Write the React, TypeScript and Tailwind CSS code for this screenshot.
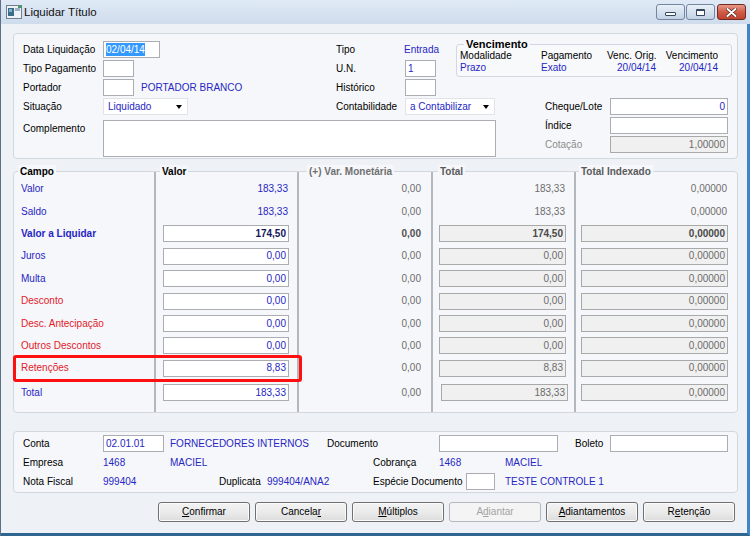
import type { ReactNode } from 'react'

const BLUE = 'text-[#2626c4]'
const RED = 'text-[#e3202a]'

function Field({
  w,
  off = false,
  right = false,
  children,
}: {
  w: string
  off?: boolean
  right?: boolean
  children?: ReactNode
}) {
  return (
    <div
      className={`${w} flex h-[17px] shrink-0 items-center border px-[2px] ${
        off ? 'border-[#a9a9a9] bg-[#f0f0f0] text-[#6b6b6b]' : 'border-[#abadb3] bg-white text-[#2626c4]'
      } ${right ? 'justify-end' : 'justify-start'}`}
    >
      {children}
    </div>
  )
}

function Combo({ w, value }: { w: string; value: string }) {
  return (
    <div className={`${w} flex h-[17px] shrink-0 items-center justify-between border border-[#e1e3e8] bg-white pl-[4px] pr-[5px] text-[#2626c4]`}>
      {value}
      <span className="h-0 w-0 border-x-[3.5px] border-t-[4px] border-x-transparent border-t-black" />
    </div>
  )
}

function Btn({ children, disabled = false }: { children: ReactNode; disabled?: boolean }) {
  return (
    <button
      className={`flex h-[20px] w-[92px] items-center justify-center rounded-[3px] border text-[10px] ${
        disabled
          ? 'border-[#b5b9bd] bg-[#f4f4f4] text-[#a3a3a3]'
          : 'border-[#707070] bg-gradient-to-b from-[#f3f3f3] via-[#ebebeb] to-[#dcdcdc] text-black shadow-[inset_0_0_0_1px_#fbfbfb]'
      }`}
    >
      {children}
    </button>
  )
}

type Row = {
  label: string
  tone: 'blue' | 'red'
  bold?: boolean
  plain?: boolean
  valor: string
  total: string
}

const rows: Row[] = [
  { label: 'Valor', tone: 'blue', plain: true, valor: '183,33', total: '183,33' },
  { label: 'Saldo', tone: 'blue', plain: true, valor: '183,33', total: '183,33' },
  { label: 'Valor a Liquidar', tone: 'blue', bold: true, valor: '174,50', total: '174,50' },
  { label: 'Juros', tone: 'blue', valor: '0,00', total: '0,00' },
  { label: 'Multa', tone: 'blue', valor: '0,00', total: '0,00' },
  { label: 'Desconto', tone: 'red', valor: '0,00', total: '0,00' },
  { label: 'Desc. Antecipação', tone: 'red', valor: '0,00', total: '0,00' },
  { label: 'Outros Descontos', tone: 'red', valor: '0,00', total: '0,00' },
  { label: 'Retenções', tone: 'red', valor: '8,83', total: '8,83' },
  { label: 'Total', tone: 'blue', valor: '183,33', total: '183,33' },
]

// the last line (Total) sits a little lower than the others
const rowCls = (r: Row) => `flex h-[22.4px] items-center ${r.label === 'Total' ? 'mt-[2px]' : ''}`

function Column({
  w,
  sep = false,
  title,
  titleCls,
  children,
}: {
  w: string
  sep?: boolean
  title: string
  titleCls: string
  children: ReactNode
}) {
  return (
    <div className={`${w} flex shrink-0 flex-col ${sep ? 'border-l-2 border-l-[#b3b8bf]' : ''}`}>
      <span className={`-mt-[7px] h-[13px] self-start bg-[#f6f7fa] px-[2px] font-bold leading-[13px] ${titleCls}`}>
        {title}
      </span>
      {children}
    </div>
  )
}

export default function App() {
  return (
    <div className="relative flex h-[536px] w-[750px] flex-col overflow-hidden border-l border-l-[#5d708a] bg-[#d3e0ef] font-['Liberation_Sans',Arial,sans-serif] text-[10px] leading-[12px] text-black">
      {/* title bar */}
      <div className="flex h-[24px] shrink-0 items-center bg-gradient-to-b from-[#e0eaf6] to-[#cfdcec] pl-[5px] pr-[4px]">
        <svg width="16" height="14" viewBox="0 0 16 14" className="shrink-0">
          <rect x="0.5" y="0.5" width="15" height="13" fill="#eef2f6" stroke="#6f7f90" />
          <rect x="2" y="3" width="6" height="8" fill="#3c6c8a" />
          <rect x="3" y="4" width="3" height="3" fill="#7fb0cf" />
          <rect x="9" y="3" width="5" height="3" fill="#9fb2c4" />
          <rect x="12" y="1" width="3" height="2" fill="#3fa34d" />
        </svg>
        <span className="ml-[2px] text-[11.5px] leading-[14px] text-[#111]">Liquidar Título</span>
        <div className="ml-auto flex items-start gap-[1px] self-start pt-[4px]">
          <div className="flex h-[16px] w-[29px] items-end justify-center rounded-[3px] border border-[#7387a3] bg-gradient-to-b from-[#e9f0f8] to-[#c3d2e5] pb-[3px]">
            <div className="h-[4px] w-[11px] rounded-[1px] border border-[#34475f] bg-white" />
          </div>
          <div className="flex h-[16px] w-[29px] items-center justify-center rounded-[3px] border border-[#7387a3] bg-gradient-to-b from-[#e9f0f8] to-[#c3d2e5]">
            <div className="h-[7px] w-[9px] rounded-[1px] border border-t-2 border-[#34475f] bg-white" />
          </div>
          <div className="ml-[1px] flex h-[16px] w-[29px] items-center justify-center rounded-[3px] border border-[#6f2a22] bg-gradient-to-b from-[#e79a8b] via-[#cf5a47] to-[#c0412f]">
            <svg width="11" height="9" viewBox="0 0 11 9">
              <path d="M1.5 1 L9.5 8 M9.5 1 L1.5 8" stroke="#4a1a14" strokeWidth="3.2" strokeLinecap="round" />
              <path d="M1.5 1 L9.5 8 M9.5 1 L1.5 8" stroke="#ffffff" strokeWidth="2" strokeLinecap="round" />
            </svg>
          </div>
        </div>
      </div>

      {/* client area */}
      <div className="flex flex-1 flex-col border-r-[3px] border-b-[3px] border-r-[#3f86c8] border-b-[#2f6690] bg-[#eef1f6] pl-[12px] pr-[9px]">
        {/* top panel */}
        <div className="mt-[9px] h-[126px] rounded-[4px] border border-[#d3d8e0] bg-[#f6f7fa] pl-[9px] pt-[4px]">
          <div className="flex items-start">
            <div className="flex w-[433px] shrink-0 flex-col gap-[2px] pt-[3px]">
              <div className="flex h-[17px] items-center">
                <span className="w-[80px] shrink-0">Data Liquidação</span>
                <div className="w-[233px] shrink-0">
                  <Field w="w-[57px]">
                    <span className="bg-[#3399ff] leading-[13px] text-white">02/04/14</span>
                  </Field>
                </div>
                <span className="w-[68px] shrink-0">Tipo</span>
                <span className={BLUE}>Entrada</span>
              </div>
              <div className="flex h-[17px] items-center">
                <span className="w-[80px] shrink-0">Tipo Pagamento</span>
                <div className="w-[233px] shrink-0">
                  <Field w="w-[31px]" />
                </div>
                <span className="w-[69px] shrink-0">U.N.</span>
                <Field w="w-[31px]">1</Field>
              </div>
              <div className="flex h-[17px] items-center">
                <span className="w-[80px] shrink-0">Portador</span>
                <div className="flex w-[233px] shrink-0 items-center">
                  <Field w="w-[31px]" />
                  <span className={`ml-[7px] ${BLUE}`}>PORTADOR BRANCO</span>
                </div>
                <span className="w-[69px] shrink-0">Histórico</span>
                <Field w="w-[31px]" />
              </div>
            </div>
            <fieldset className="mt-0 w-[276px] shrink-0 rounded-[3px] border border-[#d3d8e0] bg-[#f8f9fb] px-[3px] pb-[2px]">
              <legend className="ml-[4px] px-[2px] text-[11px] font-bold leading-[12px]">Vencimento</legend>
              <div className="grid grid-cols-[81px_66px_49px_62px] whitespace-nowrap leading-[12px]">
                <span>Modalidade</span>
                <span>Pagamento</span>
                <span className="text-right">Venc. Orig.</span>
                <span className="text-right">Vencimento</span>
                <span className={BLUE}>Prazo</span>
                <span className={BLUE}>Exato</span>
                <span className={`text-right ${BLUE}`}>20/04/14</span>
                <span className={`text-right ${BLUE}`}>20/04/14</span>
              </div>
            </fieldset>
          </div>

          <div className="mt-[2px] flex items-start">
            <div className="flex w-[474px] shrink-0 flex-col">
              <div className="flex h-[17px] items-center">
                <span className="w-[80px] shrink-0">Situação</span>
                <div className="w-[233px] shrink-0">
                  <Combo w="w-[85px]" value="Liquidado" />
                </div>
                <span className="w-[69px] shrink-0">Contabilidade</span>
                <Combo w="w-[90px]" value="a Contabilizar" />
              </div>
              <div className="mt-[5px] flex items-start">
                <span className="w-[80px] shrink-0 pt-[3px]">Complemento</span>
                <div className="h-[37px] w-[393px] border border-[#abadb3] bg-white" />
              </div>
            </div>
            <div className="ml-[48px] flex flex-col gap-[2px]">
              <div className="flex h-[17px] items-center">
                <span className="w-[65px] shrink-0">Cheque/Lote</span>
                <Field w="w-[118px]" right>
                  0
                </Field>
              </div>
              <div className="flex h-[17px] items-center">
                <span className="w-[65px] shrink-0">Índice</span>
                <Field w="w-[118px]" />
              </div>
              <div className="flex h-[17px] items-center">
                <span className="w-[65px] shrink-0 text-[#8c8c8c]">Cotação</span>
                <Field w="w-[118px]" off right>
                  1,00000
                </Field>
              </div>
            </div>
          </div>
        </div>

        {/* values panel */}
        <div className="mt-[12px] flex h-[242px] rounded-[4px] border border-[#d3d8e0] bg-[#f6f7fa]">
          <Column w="w-[140px]" title="Campo" titleCls="ml-[4px] text-black">
            {rows.map((r) => (
              <div key={r.label} className={`${rowCls(r)} pl-[7px]`}>
                <span className={`${r.tone === 'red' ? RED : BLUE} ${r.bold ? 'font-bold' : ''}`}>{r.label}</span>
              </div>
            ))}
          </Column>
          <Column w="w-[143px]" sep title="Valor" titleCls="ml-[4px] text-black">
            {rows.map((r) =>
              r.plain ? (
                <div key={r.label} className={`${rowCls(r)} pl-[7px]`}>
                  <span className={`w-[126px] pr-[1px] text-right ${BLUE}`}>{r.valor}</span>
                </div>
              ) : (
                <div key={r.label} className={`${rowCls(r)} pl-[7px]`}>
                  <Field w="w-[126px]" right>
                    {r.bold ? <span className="font-bold text-[#15155c]">{r.valor}</span> : r.valor}
                  </Field>
                </div>
              ),
            )}
          </Column>
          <Column w="w-[134px]" sep title="(+) Var. Monetária" titleCls="ml-[8px] text-[#707070]">
            {rows.map((r) => (
              <div key={r.label} className={`${rowCls(r)} justify-end pr-[10px]`}>
                <span className={r.bold ? 'font-bold text-[#505050]' : 'text-[#6d6d6d]'}>0,00</span>
              </div>
            ))}
          </Column>
          <Column w="w-[143px]" sep title="Total" titleCls="ml-[5px] text-[#5a5a5a]">
            {rows.map((r) =>
              r.plain ? (
                <div key={r.label} className={`${rowCls(r)} pl-[6px]`}>
                  <span className="w-[127px] pr-[1px] text-right text-[#6d6d6d]">{r.total}</span>
                </div>
              ) : (
                <div key={r.label} className={`${rowCls(r)} ${r.label === 'Total' ? 'pl-[8px]' : 'pl-[6px]'}`}>
                  <Field w="w-[127px]" off right>
                    {r.bold ? <span className="font-bold text-[#4a4a4a]">{r.total}</span> : r.total}
                  </Field>
                </div>
              ),
            )}
          </Column>
          <Column w="w-[163px]" sep title="Total Indexado" titleCls="ml-[3px] text-[#5a5a5a]">
            {rows.map((r) =>
              r.plain ? (
                <div key={r.label} className={`${rowCls(r)} pl-[5px]`}>
                  <span className="w-[147px] pr-[1px] text-right text-[#6d6d6d]">0,00000</span>
                </div>
              ) : (
                <div key={r.label} className={`${rowCls(r)} pl-[5px]`}>
                  <Field w="w-[147px]" off right>
                    {r.bold ? <span className="font-bold text-[#4a4a4a]">0,00000</span> : '0,00000'}
                  </Field>
                </div>
              ),
            )}
          </Column>
        </div>

        {/* bottom panel */}
        <div className="mt-[18px] flex h-[62px] flex-col gap-[2px] rounded-[4px] border border-[#d3d8e0] bg-[#f6f7fa] pl-[9px] pt-[3px]">
          <div className="flex h-[17px] items-center">
            <span className="w-[80px] shrink-0">Conta</span>
            <Field w="w-[61px]">02.01.01</Field>
            <span className={`ml-[6px] w-[157px] shrink-0 ${BLUE}`}>FORNECEDORES INTERNOS</span>
            <span className="w-[112px] shrink-0">Documento</span>
            <Field w="w-[119px]" />
            <span className="ml-[17px] w-[35px] shrink-0">Boleto</span>
            <Field w="w-[118px]" />
          </div>
          <div className="flex h-[17px] items-center">
            <span className="w-[80px] shrink-0">Empresa</span>
            <span className={`w-[67px] shrink-0 ${BLUE}`}>1468</span>
            <span className={`w-[203px] shrink-0 ${BLUE}`}>MACIEL</span>
            <span className="w-[66px] shrink-0">Cobrança</span>
            <span className={`w-[66px] shrink-0 ${BLUE}`}>1468</span>
            <span className={BLUE}>MACIEL</span>
          </div>
          <div className="flex h-[17px] items-center">
            <span className="w-[80px] shrink-0">Nota Fiscal</span>
            <span className={`w-[116px] shrink-0 ${BLUE}`}>999404</span>
            <span className="w-[48px] shrink-0">Duplicata</span>
            <span className={`w-[106px] shrink-0 ${BLUE}`}>999404/ANA2</span>
            <span className="w-[93px] shrink-0">Espécie Documento</span>
            <Field w="w-[29px]" />
            <span className={`ml-[10px] ${BLUE}`}>TESTE CONTROLE 1</span>
          </div>
        </div>

        {/* buttons */}
        <div className="mt-[9px] flex gap-[5px] pl-[145px]">
          <Btn>
            <u>C</u>onfirmar
          </Btn>
          <Btn>
            Cancela<u>r</u>
          </Btn>
          <Btn>
            <u>M</u>últiplos
          </Btn>
          <Btn disabled>
            A<u>d</u>iantar
          </Btn>
          <Btn>
            <u>A</u>diantamentos
          </Btn>
          <Btn>
            R<u>e</u>tenção
          </Btn>
        </div>
      </div>

      {/* annotation */}
      <div className="absolute left-[12px] top-[355px] h-[27px] w-[289px] rounded-[3px] border-[3px] border-[#ff1010]" />
    </div>
  )
}
